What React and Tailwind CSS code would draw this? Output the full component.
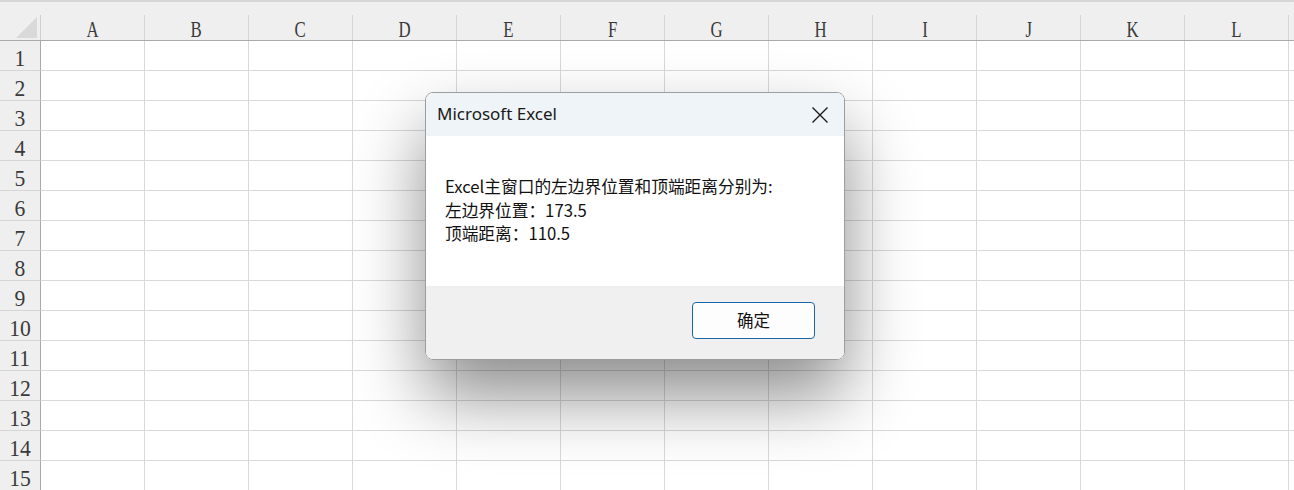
import React from "react";

const cols = ["A", "B", "C", "D", "E", "F", "G", "H", "I", "J", "K", "L"];
const rows = Array.from({ length: 15 }, (_, i) => i + 1);

function CloseIcon() {
  return (
    <svg width="18" height="18" viewBox="0 0 18 18" fill="none">
      <path d="M1.5 1.5L16.5 16.5M16.5 1.5L1.5 16.5" stroke="#1b1b1b" strokeWidth="1.4" />
    </svg>
  );
}

export default function App() {
  return (
    <div className="relative w-[1294px] h-[490px] overflow-hidden bg-white">
      {/* top strip */}
      <div className="h-[2px] bg-[#d6d6d6]" />
      <div className="grid grid-cols-[41px_repeat(12,104px)_1fr] h-[39px] bg-[#efefef] border-b border-[#a9a9a9]">
        <div className="relative border-r border-[#cfcfcf] mt-[13px]">
          <svg className="absolute left-[16px] top-[2px]" width="21" height="21" viewBox="0 0 21 21">
            <polygon points="21,0 21,21 0,21" fill="#d9d9d9" />
          </svg>
        </div>
        {cols.map((c) => (
          <div
            key={c}
            className="mt-[13px] border-r border-[#d6d6d6] flex items-center justify-center text-[24px] leading-none text-[#3a3a3a] font-['Liberation_Serif',serif]"
          >
            <span className="inline-block scale-x-[0.7] translate-y-[1px]">{c}</span>
          </div>
        ))}
        <div className="mt-[13px]" />
      </div>
      {rows.map((r) => (
        <div key={r} className="grid grid-cols-[41px_repeat(12,104px)_1fr] h-[30px]">
          <div className="bg-[#efefef] border-r border-[#a9a9a9] border-b border-b-[#d6d6d6] flex items-center justify-center text-[24px] leading-none text-[#3a3a3a] font-['Liberation_Serif',serif]">
            <span className="inline-block scale-x-[0.9] translate-y-[2px]">{r}</span>
          </div>
          {cols.map((c) => (
            <div key={c} className="border-r border-b border-[#d9d9d9]" />
          ))}
          <div className="border-b border-[#d9d9d9]" />
        </div>
      ))}

      {/* dialog */}
      <div className="absolute left-[425px] top-[92px] w-[420px] h-[268px] rounded-[8px] border border-[#9d9d9d] overflow-hidden flex flex-col shadow-[0_36px_70px_rgba(0,0,0,0.45)] font-['Noto_Sans','Noto_Sans_CJK_SC',sans-serif]">
        <div className="h-[43px] shrink-0 bg-[#eef4f7] flex items-center justify-between pl-[11px] pr-[15px]">
          <span className="text-[17px] text-[#1a1a1a] leading-none -translate-y-[1px]">Microsoft Excel</span>
          <CloseIcon />
        </div>
        <div className="h-[150px] shrink-0 bg-white pl-[19px] pt-[39px] text-[16.7px] leading-[23.5px] text-[#111] font-['Noto_Sans_CJK_SC',sans-serif]">
          <div>Excel主窗口的左边界位置和顶端距离分别为:</div>
          <div>左边界位置：173.5</div>
          <div>顶端距离：110.5</div>
        </div>
        <div className="flex-1 bg-[#f0f0f0] flex justify-end items-start pt-[16px] pr-[29px]">
          <button className="w-[123px] h-[37px] rounded-[4px] border border-[#1a67a8] bg-[#fdfdfd] text-[16.5px] text-[#111] font-['Noto_Sans_CJK_SC',sans-serif] flex items-center justify-center">
            确定
          </button>
        </div>
      </div>
    </div>
  );
}
